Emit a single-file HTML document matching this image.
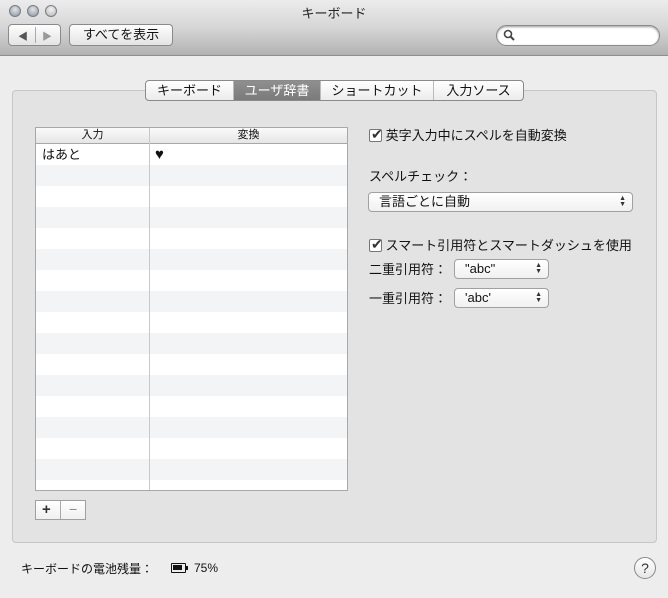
<!DOCTYPE html><html><head><meta charset="utf-8"><style>
*{margin:0;padding:0;box-sizing:border-box}
body{width:668px;height:598px;background:#ededed;font-family:"Liberation Sans","Noto Sans CJK JP",sans-serif;font-size:13px;color:#111;position:relative;overflow:hidden}
.a{position:absolute}
.tb{left:0;top:0;width:668px;height:56px;background:linear-gradient(#ececec,#d6d6d6 50%,#b2b2b2);border-bottom:1px solid #8e8e8e}
.dot{width:12px;height:12px;border-radius:50%;background:radial-gradient(circle at 50% 35%,#e0e4ea,#8d939b);border:1px solid #777d85;top:5px}
.btn{background:linear-gradient(#fdfdfd,#e4e4e4);border:1px solid #8a8a8a;border-radius:4px}
.grp{left:12px;top:90px;width:645px;height:453px;background:#e3e3e3;border:1px solid #c6c6c6;border-radius:4px}
.tabs{left:145px;top:80px;height:21px;width:379px;border:1px solid #8a8a8a;border-radius:4px;background:linear-gradient(#fff,#ececec);display:flex;overflow:hidden;font-size:13px}
.tabs div{height:19px;line-height:19px;text-align:center;border-right:1px solid #bbb}
.tbl{left:35px;top:127px;width:313px;height:364px;border:1px solid #a8a8a8;background:#fff;overflow:hidden}
.row{position:absolute;left:0;width:311px;height:21px}
.pop{background:linear-gradient(#fff,#f0f0f0);border:1px solid #a0a0a0;border-radius:4px;height:20px;line-height:18px;padding-left:10px}
.ar{position:absolute;right:6px;top:3px;font-size:7px;line-height:6px;color:#333}
.cb{width:13px;height:13px;border:1px solid #777;border-radius:2px;background:#fff;display:inline-block;position:relative}
</style></head><body>
<div class="a tb"></div>
<div class="a dot" style="left:9px"></div><div class="a dot" style="left:27px"></div><div class="a dot" style="left:45px;background:radial-gradient(circle at 50% 35%,#f2f2f2,#b5b5b5)"></div>
<div class="a" style="left:0;width:668px;top:3px;text-align:center;font-size:13px;color:#222">キーボード</div>
<div class="a btn" style="left:8px;top:24px;width:53px;height:22px"><span class="a" style="left:9px;top:3px;font-size:10px;color:#555">◀</span><span class="a" style="left:26px;top:2px;width:1px;height:16px;background:#aaa"></span><span class="a" style="left:33px;top:3px;font-size:10px;color:#999">▶</span></div>
<div class="a btn" style="left:69px;top:24px;width:104px;height:22px;text-align:center;line-height:20px">すべてを表示</div>
<div class="a" style="left:496px;top:25px;width:164px;height:21px;border-radius:11px;background:#fff;border:1px solid #8a8a8a;box-shadow:inset 0 1px 2px #999"><svg class="a" style="left:6px;top:3px" width="13" height="13"><circle cx="5" cy="5" r="3.5" fill="none" stroke="#444" stroke-width="1.6"/><path d="M7.5 7.5L11 11" stroke="#444" stroke-width="2"/></svg></div>
<div class="a grp"></div>
<div class="a tabs"><div style="width:88px">キーボード</div><div style="width:87px;background:linear-gradient(#8f8f8f,#7a7a7a);color:#fff">ユーザ辞書</div><div style="width:113px">ショートカット</div><div style="width:89px;border:none">入力ソース</div></div>
<div class="a tbl">
<div class="row" style="top:0;height:16px;background:linear-gradient(#fafafa,#e6e6e6);border-bottom:1px solid #a8a8a8;font-size:11px;line-height:15px"><span class="a" style="left:0;width:113px;text-align:center">入力</span><span class="a" style="left:114px;width:197px;text-align:center">変換</span></div>
<div class="row" style="top:16px;line-height:21px"><span class="a" style="left:6px">はあと</span><span class="a" style="left:119px;font-size:15px">♥</span></div>
<div class="row" style="top:37px;background:#f3f4f6"></div><div class="row" style="top:79px;background:#f3f4f6"></div><div class="row" style="top:121px;background:#f3f4f6"></div><div class="row" style="top:163px;background:#f3f4f6"></div><div class="row" style="top:205px;background:#f3f4f6"></div><div class="row" style="top:247px;background:#f3f4f6"></div><div class="row" style="top:289px;background:#f3f4f6"></div><div class="row" style="top:331px;background:#f3f4f6"></div>
<div class="a" style="left:113px;top:0;width:1px;height:364px;background:#c8c8c8"></div>
</div>
<div class="a" style="left:35px;top:500px;width:51px;height:20px;border:1px solid #a0a0a0;background:linear-gradient(#fff,#f0f0f0)"><span class="a" style="left:6px;top:0;font-weight:bold;font-size:15px;color:#333">+</span><span class="a" style="left:24px;top:0;width:1px;height:18px;background:#aaa"></span><span class="a" style="left:33px;top:0;font-size:14px;color:#888">−</span></div>
<div class="a" style="left:369px;top:125px"><span class="cb" style="vertical-align:-2px"><span class="a" style="left:1px;top:-4px;font-size:14px;color:#333">✔</span></span> 英字入力中にスペルを自動変換</div>
<div class="a" style="left:369px;top:166px">スペルチェック：</div>
<div class="a pop" style="left:368px;top:192px;width:265px">言語ごとに自動<span class="ar">▲<br>▼</span></div>
<div class="a" style="left:369px;top:235px"><span class="cb" style="vertical-align:-2px"><span class="a" style="left:1px;top:-4px;font-size:14px;color:#333">✔</span></span> スマート引用符とスマートダッシュを使用</div>
<div class="a" style="left:369px;top:259px">二重引用符：</div>
<div class="a pop" style="left:454px;top:259px;width:95px">"abc"<span class="ar">▲<br>▼</span></div>
<div class="a" style="left:369px;top:288px">一重引用符：</div>
<div class="a pop" style="left:454px;top:288px;width:95px">'abc'<span class="ar">▲<br>▼</span></div>
<div class="a" style="left:21px;top:560px;font-size:12px">キーボードの電池残量：</div>
<div class="a" style="left:171px;top:563px;width:15px;height:10px;border:1.5px solid #111;border-radius:1px"><div style="margin:1px;width:9px;height:5px;background:#111"></div></div>
<div class="a" style="left:186px;top:566px;width:2px;height:4px;background:#111"></div>
<div class="a" style="left:194px;top:561px;font-size:12px">75%</div>
<div class="a" style="left:634px;top:557px;width:22px;height:22px;border-radius:50%;border:1px solid #888;background:linear-gradient(#fff,#e6e6e6);text-align:center;line-height:20px;font-size:14px;color:#333">?</div>
</body></html>
